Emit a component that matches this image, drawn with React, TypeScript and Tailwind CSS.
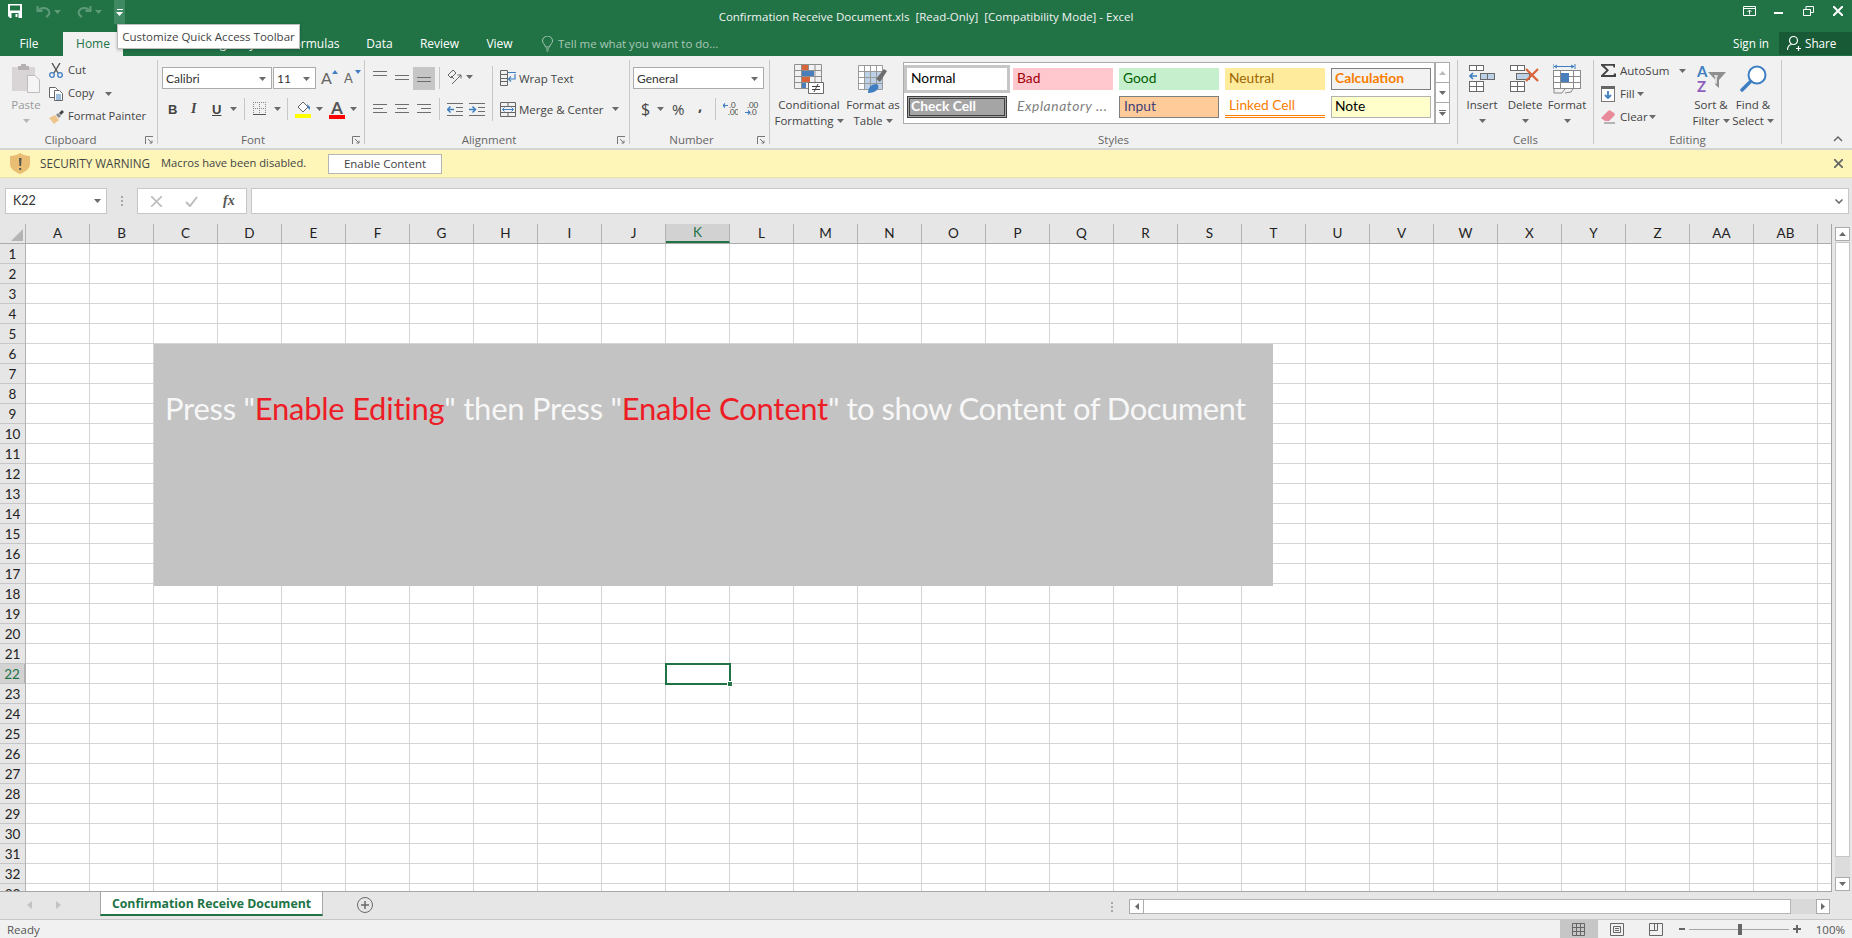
import type { ReactNode } from 'react';

const columns = ['A','B','C','D','E','F','G','H','I','J','K','L','M','N','O','P','Q','R','S','T','U','V','W','X','Y','Z','AA','AB'];
const rows = Array.from({ length: 33 }, (_, i) => i + 1);
const green = '#217346';

const Caret = ({ className = '', color = '#6a6a6a' }: { className?: string; color?: string }) => (
  <svg width="7" height="4" viewBox="0 0 7 4" className={`shrink-0 ${className}`}>
    <path d="M0 0h7L3.5 4z" fill={color} />
  </svg>
);

const Launcher = () => (
  <svg width="9" height="9" viewBox="0 0 9 9" className="absolute right-[3px] top-[76px]" fill="none" stroke="#777">
    <path d="M.5 8V.5H8" />
    <path d="M3 3l4 4M7 4.5V7H4.5" />
  </svg>
);

const Group = ({ label, width, launcher, children }: { label: string; width: string; launcher?: boolean; children: ReactNode }) => (
  <div className={`relative h-[84px] shrink-0 border-r border-[#c8c8c8] ${width}`}>
    <div className="flex h-[74px]">{children}</div>
    <div className={`h-[10px] text-center text-[11.5px] leading-[12px] text-[#666] ${launcher ? 'pr-[16px]' : ''}`}>{label}</div>
    {launcher && <Launcher />}
  </div>
);

const BigButton = ({ icon, lines, width, caretOnly, className = '', muted }: { icon: ReactNode; lines: string[]; width: string; caretOnly?: boolean; className?: string; muted?: boolean }) => (
  <div className={`flex shrink-0 flex-col items-center ${width} ${className}`}>
    <div className="flex h-[37px] items-center justify-center">{icon}</div>
    {lines.map((l, i) => (
      <div key={l} className={`flex h-[16px] items-center gap-[3px] whitespace-nowrap leading-none ${muted ? 'text-[#9a9a9a]' : ''}`}>
        {l}
        {i === lines.length - 1 && !caretOnly && <Caret />}
      </div>
    ))}
    {caretOnly && (
      <div className="flex h-[16px] items-center">
        <Caret color={muted ? '#b5b5b5' : '#6a6a6a'} />
      </div>
    )}
  </div>
);

const Lines = ({ widths, aligned = 'left' }: { widths: number[]; aligned?: 'left' | 'center' | 'right' }) => (
  <svg width="14" height="12" viewBox="0 0 14 12" stroke="#6e6e6e">
    {widths.map((w, i) => {
      const x = aligned === 'left' ? 0 : aligned === 'right' ? 14 - w : (14 - w) / 2;
      return <path key={i} d={`M${x} ${i * 4 + 1.5}h${w}`} />;
    })}
  </svg>
);

const ComboBox = ({ text, width }: { text: string; width: string }) => (
  <div className={`flex h-[22px] items-center justify-between border border-[#ababab] bg-white pl-[3px] pr-[5px] pt-[1px] font-['Lato',sans-serif] text-[12px] text-[#333] ${width}`}>
    <span>{text}</span>
    <Caret />
  </div>
);

const SaveIcon = () => (
  <svg width="14" height="14" viewBox="0 0 14 14" fill="none">
    <path d="M0 0h14v14H2l-2-2z" fill="#fff" />
    <path d="M2 1.500h10v5H2z" fill={green} />
    <path d="M3.500 9h7v5h-7z" fill={green} />
    <path d="M7.500 10h2v3h-2z" fill="#fff" />
  </svg>
);

const UndoIcon = ({ flip }: { flip?: boolean }) => (
  <svg width="15" height="13" viewBox="0 0 15 13" fill="none" stroke="#5c9a78" strokeWidth="2" className={flip ? '-scale-x-100' : ''}>
    <path d="M1.500 1v5h5" />
    <path d="M2 6c3-4 9-4 11 0 1 3-1 5-3 6" />
  </svg>
);

const PasteIcon = () => (
  <svg width="28" height="29" viewBox="0 0 28 29">
    <path d="M0 3h23v24H0z" fill="#d9d5d6" />
    <path d="M6 2h3V0h5v2h3v4H6z" fill="#b5b1b2" />
    <path d="M15.500 11.500H23l4.500 4.500v12.500H15.500z" fill="#f6f5f6" stroke="#c0bcbd" />
  </svg>
);

const CutIcon = () => (
  <svg width="14" height="15" viewBox="0 0 14 15" fill="none">
    <path d="M3 0l6 10M11 0L5 10" stroke="#555" strokeWidth="1.400" />
    <circle cx="3" cy="12" r="2.300" stroke="#3f7fc1" strokeWidth="1.300" />
    <circle cx="11" cy="12" r="2.300" stroke="#3f7fc1" strokeWidth="1.300" />
  </svg>
);

const CopyIcon = () => (
  <svg width="14" height="14" viewBox="0 0 14 14" fill="none">
    <path d="M.5.500h6l2 2v8h-8z" fill="#fff" stroke="#666" />
    <path d="M5.500 3.500h5l3 3v7h-8z" fill="#fff" stroke="#666" />
    <path d="M7 8h5M7 10h5M7 12h5" stroke="#3f7fc1" />
  </svg>
);

const PainterIcon = () => (
  <svg width="16" height="14" viewBox="0 0 16 14">
    <path d="M0 8l6-3 4 5-5 4z" fill="#eec58a" />
    <path d="M7 5l3 3 2-2-3-3z" fill="#8a8a8a" />
    <path d="M10 3l3-3 2 2-3 3z" fill="#444" />
  </svg>
);

const GrowIcon = ({ up }: { up: boolean }) => (
  <div className="relative flex h-[22px] w-[14px] items-center font-['Lato',sans-serif] leading-none text-[#666]">
    <span className={up ? 'text-[16px]' : 'text-[13px]'}>A</span>
    <svg width="6" height="4" viewBox="0 0 6 4" className="absolute right-[-3px] top-[3px]">
      <path d={up ? 'M0 4h6L3 0z' : 'M0 0h6L3 4z'} fill="#3f7fc1" />
    </svg>
  </div>
);

const BorderIcon = () => (
  <svg width="13" height="14" viewBox="0 0 13 14" fill="none" stroke="#888" strokeDasharray="1 1">
    <path d="M.5 0v12M6.500 0v12M12.500 0v12M0 .500h13M0 6.500h13" />
    <path d="M0 12.500h13" strokeDasharray="none" stroke="#555" />
  </svg>
);

const FillIcon = () => (
  <svg width="16" height="17" viewBox="0 0 16 17" fill="none">
    <path d="M3 6l5-5 5 5-5 5z" stroke="#666" fill="#fff" />
    <path d="M12 3l3 3v3l-2-2z" fill="#3f7fc1" />
    <path d="M0 13h16v4H0z" fill="#ffff00" />
  </svg>
);

const FontColorIcon = () => (
  <div className="flex w-[16px] flex-col items-center">
    <span className="h-[14px] font-['Lato',sans-serif] text-[17px] font-bold leading-[15px] text-[#555]">A</span>
    <span className="mt-[1px] h-[4px] w-[16px] bg-[#ff0000]" />
  </div>
);

const OrientIcon = () => (
  <svg width="16" height="16" viewBox="0 0 16 16" fill="none" stroke="#666">
    <path d="M1 6l5-5 3 3-5 5zM4 7l3 3" />
    <path d="M5 15L14 6M10.500 6H14v3.500" />
  </svg>
);

const WrapIcon = () => (
  <svg width="16" height="16" viewBox="0 0 16 16" fill="none">
    <path d="M.5.500h7v4h-7zM.5 4.500h7v4h-7zM.5 8.500h7v7h-7zM7.500 11.500h-7" stroke="#666" />
    <path d="M8 2.500h8" stroke="#3f7fc1" />
    <path d="M15 4v5h-6M11 6.500L8.500 9l2.500 2.500" stroke="#3f7fc1" strokeWidth="1.200" />
  </svg>
);

const MergeIcon = () => (
  <svg width="16" height="15" viewBox="0 0 16 15" fill="none">
    <path d="M.5.500h15v14H.5zM.5 4.500h15M.5 10.500h15M8 .500v4M8 10.500v4" stroke="#666" />
    <path d="M2.500 7.500h11M4.500 5.500l-2 2 2 2M11.500 5.500l2 2-2 2" stroke="#3f7fc1" />
  </svg>
);

const IndentIcon = ({ flip }: { flip?: boolean }) => (
  <svg width="16" height="13" viewBox="0 0 16 13" fill="none">
    <path d="M0 .500h16M9 4.500h7M9 8.500h7M0 12.500h16" stroke="#6e6e6e" />
    {flip ? (
      <path d="M0 6.500h6M3.500 3.500l3 3-3 3" stroke="#3f7fc1" strokeWidth="1.500" />
    ) : (
      <path d="M7 6.500H1M3.500 3.500l-3 3 3 3" stroke="#3f7fc1" strokeWidth="1.500" />
    )}
  </svg>
);

const DecimalIcon = ({ more }: { more?: boolean }) => (
  <svg width="15" height="14" viewBox="0 0 15 14" className="font-['Lato',sans-serif]">
    <text x={more ? 6 : 2} y="6" fontSize="8" fill="#444">{more ? '.0' : '.00'}</text>
    <text x="5" y="13" fontSize="8" fill="#444">{more ? '.00' : '.0'}</text>
    {more ? (
      <path d="M5 3.500H0M2 1.500l-2 2 2 2" fill="none" stroke="#3f7fc1" strokeWidth="1.200" />
    ) : (
      <path d="M0 10.500h5M3 8.500l2 2-2 2" fill="none" stroke="#3f7fc1" strokeWidth="1.200" />
    )}
  </svg>
);

const ConditionalIcon = () => (
  <svg width="30" height="30" viewBox="0 0 30 30" fill="none">
    <path d="M.5.500h27v24H.5zM7.500.500v24M14.500.500v24M21 .500v24M.5 6.500h27M.5 12.500h27M.5 18.500h27" stroke="#8f8f8f" />
    <path d="M8 1h6v5H8zM8 13h8v5H8z" fill="#d9643a" />
    <path d="M8 7h12v5H8zM8 19h4v5H8z" fill="#4a7ebb" />
    <path d="M14.500 18.500h15v11h-15z" fill="#fff" stroke="#6a6a6a" />
    <path d="M18 22.500h8M18 25.500h8M24 20l-4 8" stroke="#444" />
  </svg>
);

const TableIcon = () => (
  <svg width="30" height="30" viewBox="0 0 30 30" fill="none">
    <path d="M0 2h24v24H0z" fill="#fff" />
    <path d="M6 7h18v19H6z" fill="#bcd0e6" />
    <path d="M.5 1.500h24v24H.5zM6.500 1.500v24M12.500 1.500v24M18.500 1.500v24M.5 7.500h24M.5 13.500h24M.5 19.500h24" stroke="#9a9a9a" />
    <path d="M18 15l8-10 3 2-7 11z" fill="#6d6d6d" />
    <path d="M10 29c0-5 3-9 8-9 3 0 3 4 1 6-2 2-5 3-9 3z" fill="#3f7fc1" />
  </svg>
);

const GridRect = ({ x, y, w, h, cols, rowsN, fill }: { x: number; y: number; w: number; h: number; cols: number; rowsN: number; fill?: string }) => (
  <g>
    <rect x={x + 0.5} y={y + 0.5} width={w} height={h} fill={fill ?? '#fff'} stroke="#6a6a6a" />
    {Array.from({ length: cols - 1 }, (_, i) => (
      <path key={i} d={`M${x + 0.5 + (w * (i + 1)) / cols} ${y}v${h}`} stroke="#6a6a6a" />
    ))}
    {Array.from({ length: rowsN - 1 }, (_, i) => (
      <path key={i} d={`M${x} ${y + 0.5 + (h * (i + 1)) / rowsN}h${w}`} stroke="#6a6a6a" />
    ))}
  </g>
);

const InsertIcon = () => (
  <svg width="26" height="27" viewBox="0 0 26 27" fill="none">
    <GridRect x={0} y={0} w={14} h={5} cols={2} rowsN={1} />
    <GridRect x={11} y={8} w={14} h={6} cols={2} rowsN={1} fill="#bcd0e6" />
    <path d="M8 11H1M4 8l-3 3 3 3" stroke="#3f7fc1" strokeWidth="1.600" />
    <GridRect x={0} y={16} w={14} h={10} cols={2} rowsN={2} />
  </svg>
);

const DeleteIcon = () => (
  <svg width="30" height="27" viewBox="0 0 30 27" fill="none">
    <GridRect x={0} y={0} w={14} h={5} cols={2} rowsN={1} />
    <rect x="6.500" y="8.500" width="13" height="6" fill="#bcd0e6" stroke="#6a6a6a" />
    <GridRect x={0} y={16} w={14} h={10} cols={2} rowsN={2} />
    <path d="M16 4l12 12M28 4L16 16" stroke="#d9643a" strokeWidth="2.200" />
  </svg>
);

const FormatIcon = () => (
  <svg width="28" height="30" viewBox="0 0 28 30" fill="none">
    <path d="M0 0v5M22 0v5M1 2.500h20M4 1L1.500 2.500 4 4M18 1l3 1.500L18 4" stroke="#3f7fc1" />
    <rect x=".5" y="6.500" width="27" height="18" fill="#fff" stroke="#8a8a8a" />
    <path d="M7.500 6.500v18M20.500 6.500v18M.5 12.500h27M.5 18.500h27" stroke="#8a8a8a" />
    <rect x="8" y="9" width="8" height="9" fill="#4a7ebb" />
    <path d="M1 25v4h8l3-4M12 29l6-1 2-3" stroke="#8a8a8a" />
  </svg>
);

const SigmaIcon = () => (
  <svg width="15" height="13" viewBox="0 0 15 13">
    <path d="M0 0h14v3.500h-1.500L12 1.800H3.500L8 6.200 3.200 11H12.500l.5-1.600H15V13H0v-1.400L5.300 6.300 0 1.400z" fill="#444" />
  </svg>
);

const FillDownIcon = () => (
  <svg width="14" height="16" viewBox="0 0 14 16" fill="none">
    <rect x=".5" y=".5" width="13" height="15" fill="#fff" stroke="#777" />
    <path d="M0 0h14v3H0z" fill="#666" />
    <path d="M7 5v7M4 9l3 3 3-3" stroke="#3f7fc1" strokeWidth="1.800" />
  </svg>
);

const EraserIcon = () => (
  <svg width="14" height="14" viewBox="0 0 14 14" fill="none">
    <path d="M0 8l7-7c1-1 2-1 3 0l3 2c1 1 1 2 0 3l-5 5H4z" fill="#e98a9b" />
    <path d="M3 13h11" stroke="#777" />
  </svg>
);

const SortIcon = () => (
  <svg width="29" height="27" viewBox="0 0 29 27" className="font-['Lato',sans-serif]">
    <text x="0" y="12" fontSize="15" fontWeight="700" fill="#3f7fc1">A</text>
    <text x="0" y="27" fontSize="15" fontWeight="700" fill="#8f5fbf">Z</text>
    <path d="M11 7h18l-7 8v8l-3.500-3v-5z" fill="#8f8f8f" />
    <path d="M17 10h4l-1 3v6l-2-1.500V13z" fill="#dcdcdc" />
  </svg>
);

const FindIcon = () => (
  <svg width="27" height="27" viewBox="0 0 27 27" fill="none">
    <circle cx="17" cy="10" r="8.500" stroke="#3f7fc1" strokeWidth="2" fill="#fff" />
    <path d="M10.500 16.500L2 25" stroke="#3f7fc1" strokeWidth="3.500" strokeLinecap="round" />
  </svg>
);

const StyleCell = ({ className, children }: { className: string; children: string }) => (
  <div className={`flex h-[22px] w-[100px] items-center overflow-hidden whitespace-nowrap pb-[2px] font-['Lato',sans-serif] text-[13.8px] leading-none ${className}`}>
    {children}
  </div>
);

const ScrollButton = ({ children, className = '' }: { children: ReactNode; className?: string }) => (
  <div className={`flex items-center justify-center border border-[#ababab] bg-white ${className}`}>{children}</div>
);

const Sheet = () => (
  <div className="relative h-[668px] w-[1832px] shrink-0 overflow-hidden border-b border-r border-[#a6a6a6] bg-white font-['Lato',sans-serif] text-[13.5px] text-[#222]">
    <div className="flex h-[20px] border-b border-[#ababab] bg-[#e6e6e6]">
      <div className="flex w-[26px] shrink-0 items-end justify-end border-r border-[#b1b1b1] p-[2px]">
        <svg width="12" height="12" viewBox="0 0 12 12"><path d="M12 0v12H0z" fill="#b4b4b4" /></svg>
      </div>
      {columns.map((c) => (
        <div
          key={c}
          className={`flex w-[64px] shrink-0 items-center justify-center border-r border-[#b1b1b1] ${c === 'K' ? 'border-b-2 border-b-[#217346] bg-[#d2d2d2] text-[#217346]' : ''}`}
        >
          {c}
        </div>
      ))}
    </div>
    {rows.map((r) => (
      <div key={r} className="flex h-[20px]">
        <div
          className={`flex w-[26px] shrink-0 items-center justify-center border-b border-r border-b-[#c6c6c6] border-r-[#b1b1b1] pt-[1px] ${r === 22 ? 'border-r-2 border-r-[#217346] bg-[#d2d2d2] text-[#217346]' : 'bg-[#e6e6e6]'}`}
        >
          {r}
        </div>
        {columns.map((c) => (
          <div key={c} className="w-[64px] shrink-0 border-b border-r border-[#d4d4d4]" />
        ))}
        <div className="flex-1 border-b border-[#d4d4d4]" />
      </div>
    ))}

    {/* picture lying over the cells */}
    <div className="absolute left-[154px] top-[120px] h-[242px] w-[1119px] whitespace-nowrap bg-[#c3c3c3] pl-[11px] pt-[46px] font-['Lato',sans-serif] text-[31px] leading-[36px] tracking-[-0.26px] text-[#f7f7f7]">
      Press "<span className="text-[#ee1c25]">Enable Editing</span>" then Press "<span className="text-[#ee1c25]">Enable Content</span>"<span className="tracking-[-0.53px]"> to show Content of Document</span>
    </div>

    {/* selected cell K22 */}
    <div className="absolute left-[665px] top-[439px] h-[22px] w-[66px] border-2 border-[#217346]">
      <div className="absolute bottom-[-4px] right-[-4px] h-[6px] w-[6px] border border-white bg-[#217346]" />
    </div>
  </div>
);

export default function App() {
  return (
    <div className="relative flex h-[938px] w-[1852px] flex-col overflow-hidden bg-[#e6e6e6] font-['Open_Sans',sans-serif] text-[11.5px] text-[#444]">
      {/* title bar */}
      <div className="h-[56px] shrink-0 bg-[#217346] text-white">
        <div className="grid h-[32px] grid-cols-[1fr_auto_1fr]">
          <div className="flex items-start">
            <div className="ml-[8px] mt-[4px]"><SaveIcon /></div>
            <div className="ml-[14px] mt-[5px]"><UndoIcon /></div>
            <Caret className="ml-[3px] mt-[10px]" color="#5c9a78" />
            <div className="ml-[16px] mt-[5px]"><UndoIcon flip /></div>
            <Caret className="ml-[3px] mt-[10px]" color="#5c9a78" />
            <div className="ml-[12px] flex h-[24px] w-[11px] flex-col items-center justify-center gap-[2px] bg-[#3f8a63]">
              <span className="h-[1px] w-[6px] bg-white" />
              <Caret color="#fff" />
            </div>
          </div>
          <div className="whitespace-pre pt-[11px] text-[11.5px] leading-none text-[#f2f2f2]">Confirmation Receive Document.xls  [Read-Only]  [Compatibility Mode] - Excel</div>
          <div className="flex items-start justify-end">
            <svg width="13" height="10" viewBox="0 0 13 10" fill="none" stroke="#fff" className="mt-[6px]">
              <path d="M.5.500h12v9H.5zM.5 2.500h12M6.500 8.500V4M4.500 6l2-2 2 2" />
            </svg>
            <span className="ml-[18px] mt-[12px] h-[2px] w-[9px] bg-white" />
            <svg width="11" height="10" viewBox="0 0 11 10" fill="none" stroke="#fff" className="ml-[20px] mt-[6px]">
              <path d="M.5 3.500h7v6h-7zM3 3V.5h7.500v6H8" />
            </svg>
            <svg width="10" height="10" viewBox="0 0 10 10" fill="none" stroke="#fff" strokeWidth="2" className="ml-[19px] mr-[9px] mt-[6px]">
              <path d="M0 0l10 10M10 0L0 10" />
            </svg>
          </div>
        </div>
        <div className="flex h-[24px] items-center text-[12px] leading-none">
          <div className="flex h-full w-[63px] shrink-0 items-center justify-center pr-[5px]">File</div>
          <div className="flex h-full w-[60px] shrink-0 items-center justify-center bg-[#f1f1f1] text-[#217346]">Home</div>
          <div className="flex h-full w-[77px] shrink-0 items-center justify-center">Insert</div>
          <div className="flex h-full w-[80px] shrink-0 items-center justify-center whitespace-nowrap">Page Layout</div>
          <div className="flex h-full w-[67px] shrink-0 items-center justify-center">Formulas</div>
          <div className="flex h-full w-[65px] shrink-0 items-center justify-center">Data</div>
          <div className="flex h-full w-[55px] shrink-0 items-center justify-center">Review</div>
          <div className="flex h-full w-[65px] shrink-0 items-center justify-center">View</div>
          <svg width="11" height="16" viewBox="0 0 11 16" fill="none" stroke="#a9c7b5" className="ml-[10px] shrink-0">
            <path d="M3.500 11C3 8 .5 7.500.5 5a5 5 0 0 1 10 0c0 2.500-2.500 3-3 6zM4 13h3M4.500 15h2" />
          </svg>
          <span className="ml-[5px] whitespace-nowrap text-[11.5px] text-[#a9c7b5]">Tell me what you want to do...</span>
          <div className="ml-auto flex h-full items-center text-[11.7px]">
            <span className="mr-[10px]">Sign in</span>
            <div className="flex h-[23px] w-[73px] items-center self-start bg-[#185a36] pl-[8px]">
              <svg width="14" height="15" viewBox="0 0 14 15" fill="none" stroke="#fff" strokeWidth="1.200">
                <circle cx="6.500" cy="4.500" r="4" />
                <path d="M.5 14c0-3 1.500-5 4-5.500M9 12.500h5M11.500 10v5" />
              </svg>
              <span className="ml-[4px]">Share</span>
            </div>
          </div>
        </div>
      </div>

      {/* ribbon */}
      <div className="relative flex h-[94px] shrink-0 border-b-2 border-[#d4d4d4] bg-[#f1f1f1] pt-[4px]">
        <Group label="Clipboard" width="w-[158px]" launcher>
          <BigButton width="w-[30px]" className="ml-[11px]" icon={<PasteIcon />} lines={['Paste']} caretOnly muted />
          <div className="-mt-[1px] ml-[8px] flex flex-col text-[11.2px]">
            <div className="flex h-[23px] items-center"><span className="w-[19px]"><CutIcon /></span>Cut</div>
            <div className="flex h-[23px] items-center"><span className="w-[19px]"><CopyIcon /></span>Copy<Caret className="ml-[11px]" /></div>
            <div className="flex h-[23px] items-center whitespace-nowrap"><span className="w-[19px]"><PainterIcon /></span>Format Painter</div>
          </div>
        </Group>

        <Group label="Font" width="w-[207px]" launcher>
          <div className="flex flex-col">
            <div className="mt-[7px] flex h-[22px] items-center">
              <ComboBox text="Calibri" width="ml-[4px] w-[110px]" />
              <ComboBox text="11" width="ml-[1px] w-[43px]" />
              <div className="ml-[5px]"><GrowIcon up /></div>
              <div className="ml-[9px]"><GrowIcon up={false} /></div>
            </div>
            <div className="mt-[9px] flex h-[22px] items-center">
              <span className="ml-[10px] w-[9px] font-['Liberation_Sans',sans-serif] text-[13px] font-bold leading-none">B</span>
              <span className="ml-[14px] w-[7px] font-['Liberation_Serif',serif] text-[14px] font-bold italic leading-none">I</span>
              <span className="ml-[14px] w-[9px] font-['Liberation_Sans',sans-serif] text-[13px] font-bold leading-none underline">U</span>
              <Caret className="ml-[9px]" />
              <span className="ml-[7px] h-[22px] w-px bg-[#c8c8c8]" />
              <div className="ml-[8px] w-[13px]"><BorderIcon /></div>
              <Caret className="ml-[8px]" />
              <span className="ml-[6px] h-[22px] w-px bg-[#c8c8c8]" />
              <div className="ml-[7px] w-[16px]"><FillIcon /></div>
              <Caret className="ml-[5px]" />
              <div className="ml-[6px]"><FontColorIcon /></div>
              <Caret className="ml-[5px]" />
            </div>
          </div>
        </Group>

        <Group label="Alignment" width="w-[265px]" launcher>
          <div className="flex w-[127px] shrink-0 flex-col">
            <div className="mt-[7px] flex h-[22px] items-start">
              <div className="ml-[8px] mt-[3px]"><Lines widths={[14, 14]} /></div>
              <div className="ml-[8px] mt-[7px]"><Lines widths={[14, 14]} /></div>
              <div className="ml-[4px] flex h-[23px] w-[22px] items-end justify-center bg-[#c6c6c6] pb-[2px]"><Lines widths={[14, 14]} /></div>
              <span className="ml-[4px] h-[22px] w-px bg-[#c8c8c8]" />
              <div className="ml-[7px] mt-[2px]"><OrientIcon /></div>
              <Caret className="ml-[3px] mt-[8px]" />
            </div>
            <div className="mt-[9px] flex h-[22px] items-center">
              <div className="ml-[8px]"><Lines widths={[14, 10, 14]} /></div>
              <div className="ml-[8px]"><Lines widths={[14, 10, 14]} aligned="center" /></div>
              <div className="ml-[8px]"><Lines widths={[14, 10, 14]} aligned="right" /></div>
              <span className="ml-[8px] h-[22px] w-px bg-[#c8c8c8]" />
              <div className="ml-[7px]"><IndentIcon /></div>
              <div className="ml-[6px]"><IndentIcon flip /></div>
            </div>
          </div>
          <span className="mt-[6px] h-[55px] w-px shrink-0 bg-[#c8c8c8]" />
          <div className="flex flex-col">
            <div className="ml-[7px] mt-[7px] flex h-[22px] items-center"><WrapIcon /><span className="ml-[3px] mt-[2px] whitespace-nowrap">Wrap Text</span></div>
            <div className="ml-[7px] mt-[9px] flex h-[22px] items-center"><MergeIcon /><span className="ml-[3px] mt-[2px] w-[93px] whitespace-nowrap">Merge &amp; Center</span><Caret /></div>
          </div>
        </Group>

        <Group label="Number" width="w-[140px]" launcher>
          <div className="flex flex-col">
            <div className="mt-[7px] flex h-[22px] items-center"><ComboBox text="General" width="ml-[3px] w-[131px]" /></div>
            <div className="mt-[9px] flex h-[22px] items-center">
              <span className="ml-[11px] w-[7px] text-[16px] leading-none">$</span>
              <Caret className="ml-[9px]" />
              <span className="ml-[8px] w-[13px] text-[15px] leading-none">%</span>
              <span className="ml-[13px] w-[4px] -translate-y-[4px] text-[15px] font-bold leading-none">,</span>
              <span className="ml-[13px] h-[22px] w-px bg-[#c8c8c8]" />
              <div className="ml-[7px] w-[15px]"><DecimalIcon more /></div>
              <div className="ml-[7px] w-[15px]"><DecimalIcon /></div>
            </div>
          </div>
        </Group>

        <Group label="Styles" width="w-[688px]">
          <BigButton width="w-[68px]" className="ml-[5px]" icon={<ConditionalIcon />} lines={['Conditional', 'Formatting']} />
          <BigButton width="w-[54px]" className="ml-[3px]" icon={<TableIcon />} lines={['Format as', 'Table']} />
          <div className="ml-[3px] mt-[2px] flex h-[62px]">
            <div className="grid w-[532px] grid-cols-[100px_100px_100px_100px_100px] content-start gap-x-[6px] gap-y-[6px] border border-[#ababab] bg-white pl-[3px] pt-[5px]">
              <StyleCell className="bg-white pl-[4px] text-black ring-[3px] ring-[#c6c6c6]">Normal</StyleCell>
              <StyleCell className="bg-[#ffc7ce] pl-[4px] text-[#9c0006]">Bad</StyleCell>
              <StyleCell className="bg-[#c6efce] pl-[4px] text-[#006100]">Good</StyleCell>
              <StyleCell className="bg-[#ffeb9c] pl-[4px] text-[#9c6500]">Neutral</StyleCell>
              <StyleCell className="border border-[#7f7f7f] bg-[#f2f2f2] pl-[3px] font-bold text-[#fa7d00]">Calculation</StyleCell>
              <StyleCell className="border-[3px] border-double border-[#3f3f3f] bg-[#a5a5a5] pl-[1px] font-bold text-white">Check Cell</StyleCell>
              <StyleCell className="pl-[4px] italic tracking-[0.6px] text-[#7f7f7f]">Explanatory ...</StyleCell>
              <StyleCell className="border border-[#7f7f7f] bg-[#ffcc99] pl-[4px] text-[#3f3f76]">Input</StyleCell>
              <StyleCell className="border-b-[3px] border-double border-[#ff8001] pl-[4px] text-[#fa7d00]">Linked Cell</StyleCell>
              <StyleCell className="border border-[#b2b2b2] bg-[#ffffcc] pl-[3px] text-black">Note</StyleCell>
            </div>
            <div className="flex w-[15px] flex-col">
              <ScrollButton className="h-[21px] bg-[#e6e6e6]"><svg width="7" height="4" viewBox="0 0 7 4"><path d="M0 4h7L3.500 0z" fill="#bdbdbd" /></svg></ScrollButton>
              <ScrollButton className="h-[20px] border-t-0"><Caret /></ScrollButton>
              <ScrollButton className="h-[21px] flex-col gap-[1px] border-t-0"><span className="h-px w-[7px] bg-[#6a6a6a]" /><Caret /></ScrollButton>
            </div>
          </div>
        </Group>

        <Group label="Cells" width="w-[136px]">
          <BigButton width="w-[48px]" icon={<InsertIcon />} lines={['Insert']} caretOnly />
          <BigButton width="w-[38px]" icon={<DeleteIcon />} lines={['Delete']} caretOnly />
          <BigButton width="w-[46px]" icon={<FormatIcon />} lines={['Format']} caretOnly />
        </Group>

        <Group label="Editing" width="w-[188px]">
          <div className="-mt-[1px] flex w-[96px] shrink-0 flex-col">
            <div className="flex h-[23px] items-center pl-[7px]"><span className="w-[19px]"><SigmaIcon /></span><span className="w-[54px]">AutoSum</span><Caret className="ml-[5px]" /></div>
            <div className="flex h-[23px] items-center pl-[7px]"><span className="w-[19px]"><FillDownIcon /></span><span className="w-[17px]">Fill</span><Caret /></div>
            <div className="flex h-[23px] items-center pl-[7px]"><span className="w-[19px]"><EraserIcon /></span><span className="w-[29px]">Clear</span><Caret /></div>
          </div>
          <BigButton width="w-[42px]" icon={<SortIcon />} lines={['Sort &', 'Filter']} />
          <BigButton width="w-[42px]" icon={<FindIcon />} lines={['Find &', 'Select']} />
        </Group>

        <svg width="10" height="6" viewBox="0 0 10 6" fill="none" stroke="#6a6a6a" strokeWidth="1.500" className="absolute bottom-[6px] right-[9px]">
          <path d="M1 5l4-4 4 4" />
        </svg>
      </div>

      {/* security warning */}
      <div className="flex h-[28px] shrink-0 items-center border-b border-[#e6e2a8] bg-[#fdf6b8] text-[#444]">
        <svg width="20" height="21" viewBox="0 0 20 21" className="ml-[10px] shrink-0">
          <path d="M10 0c3 2 6 3 10 3v8c0 5-5 8-10 10C5 19 0 16 0 11V3c4 0 7-1 10-3z" fill="#e9bd72" />
          <path d="M9 5h2.500l-.4 8H9.400zM9.200 15h2v2h-2z" fill="#555" />
        </svg>
        <span className="ml-[10px] w-[121px] whitespace-nowrap text-[11.7px]">SECURITY WARNING</span>
        <span className="w-[146px] whitespace-nowrap text-[11.2px]">Macros have been disabled.</span>
        <div className="ml-[21px] flex h-[20px] w-[114px] items-center justify-center border border-[#b5b5b5] bg-white">Enable Content</div>
        <svg width="9" height="9" viewBox="0 0 9 9" fill="none" stroke="#666" strokeWidth="1.800" className="ml-auto mr-[9px]">
          <path d="M0 0l9 9M9 0L0 9" />
        </svg>
      </div>

      {/* formula bar */}
      <div className="mt-[10px] flex h-[26px] shrink-0 items-stretch">
        <div className="ml-[5px] flex w-[102px] items-center justify-between border border-[#c6c6c6] bg-white pl-[7px] pr-[5px] font-['Lato',sans-serif] text-[12.5px] text-[#333]">
          K22<Caret />
        </div>
        <div className="flex w-[30px] flex-col items-center justify-center gap-[2px]">
          <span className="h-[2px] w-[2px] bg-[#a8a8a8]" />
          <span className="h-[2px] w-[2px] bg-[#a8a8a8]" />
          <span className="h-[2px] w-[2px] bg-[#a8a8a8]" />
        </div>
        <div className="flex w-[110px] items-center border border-[#c6c6c6] bg-white">
          <svg width="11" height="11" viewBox="0 0 11 11" fill="none" stroke="#bdbdbd" strokeWidth="1.600" className="ml-[13px]"><path d="M0 0l11 11M11 0L0 11" /></svg>
          <svg width="13" height="11" viewBox="0 0 13 11" fill="none" stroke="#bdbdbd" strokeWidth="2" className="ml-[23px]"><path d="M1 6l4 4 7-9" /></svg>
          <span className="ml-[25px] font-['Liberation_Serif',serif] text-[14px] font-bold italic leading-none text-[#555]">fx</span>
        </div>
        <div className="ml-[4px] flex w-[1598px] items-center justify-end border border-[#c6c6c6] bg-white pr-[5px]">
          <svg width="8" height="5" viewBox="0 0 8 5" fill="none" stroke="#666" strokeWidth="1.500"><path d="M.5.500L4 4 7.500.500" /></svg>
        </div>
      </div>

      {/* sheet and vertical scroll bar */}
      <div className="mt-[10px] flex h-[668px] shrink-0">
        <Sheet />
        <div className="ml-[3px] flex h-[667px] w-[15px] flex-col pt-[3px]">
          <ScrollButton className="h-[14px]"><svg width="7" height="4" viewBox="0 0 7 4"><path d="M0 4h7L3.500 0z" fill="#6a6a6a" /></svg></ScrollButton>
          <div className="mt-[1px] h-[615px] border border-[#c6c6c6] bg-white" />
          <div className="flex-1 bg-[#dcdcdc]" />
          <ScrollButton className="h-[14px]"><Caret /></ScrollButton>
        </div>
      </div>

      {/* tab strip */}
      <div className="flex h-[27px] shrink-0 items-start">
        <svg width="5" height="8" viewBox="0 0 5 8" className="ml-[27px] mt-[9px]"><path d="M5 0v8L0 4z" fill="#c2c2c2" /></svg>
        <svg width="5" height="8" viewBox="0 0 5 8" className="ml-[24px] mt-[9px]"><path d="M0 0v8l5-4z" fill="#c2c2c2" /></svg>
        <div className="ml-[39px] flex h-[24px] w-[223px] items-center justify-center whitespace-nowrap border-x border-b-2 border-x-[#a6a6a6] border-b-[#217346] bg-white pt-[2px] text-[12.3px] font-bold text-[#217346]">
          Confirmation Receive Document
        </div>
        <svg width="16" height="16" viewBox="0 0 16 16" fill="none" stroke="#6a6a6a" className="ml-[34px] mt-[5px]">
          <circle cx="8" cy="8" r="7.500" />
          <path d="M8 4v8M4 8h8" strokeWidth="1.500" />
        </svg>
        <div className="ml-[738px] mt-[7px] flex h-[15px] flex-col justify-center gap-[2px]">
          <span className="h-[2px] w-[2px] bg-[#a8a8a8]" />
          <span className="h-[2px] w-[2px] bg-[#a8a8a8]" />
          <span className="h-[2px] w-[2px] bg-[#a8a8a8]" />
        </div>
        <div className="ml-[16px] mt-[7px] flex h-[15px] w-[701px]">
          <ScrollButton className="w-[15px]"><svg width="4" height="7" viewBox="0 0 4 7"><path d="M4 0v7L0 3.500z" fill="#6a6a6a" /></svg></ScrollButton>
          <div className="w-[647px] border-y border-r border-[#b5b5b5] bg-white" />
          <div className="flex-1 bg-[#d9d9d9]" />
          <ScrollButton className="w-[14px]"><svg width="4" height="7" viewBox="0 0 4 7"><path d="M0 0v7l4-3.500z" fill="#6a6a6a" /></svg></ScrollButton>
        </div>
      </div>

      {/* status bar */}
      <div className="flex h-[19px] flex-1 items-center border-t border-[#c6c6c6] bg-[#f1f1f1] text-[#555]">
        <span className="ml-[7px] mt-[1px]">Ready</span>
        <div className="ml-auto flex h-full w-[38px] items-center justify-center bg-[#c6c6c6]">
          <svg width="13" height="13" viewBox="0 0 13 13" fill="none" stroke="#666">
            <path d="M.5.500h12v12H.5zM4.500.500v12M8.500.500v12M.5 4.500h12M.5 8.500h12" />
          </svg>
        </div>
        <svg width="14" height="13" viewBox="0 0 14 13" fill="none" stroke="#666" className="ml-[12px]">
          <path d="M.5.500h13v12H.5zM3.500 3.500h7v6h-7zM5 5.500h4M5 7.500h4" />
        </svg>
        <svg width="14" height="13" viewBox="0 0 14 13" fill="none" stroke="#666" className="ml-[25px]">
          <path d="M.5.500h13v12H.5zM.5 7.500h8M5.500.500v7M8.500.500v7" />
        </svg>
        <span className="ml-[16px] h-[2px] w-[6px] bg-[#666]" />
        <div className="relative ml-[4px] h-px w-[100px] bg-[#a6a6a6]">
          <span className="absolute left-[49px] top-[-5px] h-[11px] w-[4px] bg-[#666]" />
        </div>
        <svg width="8" height="8" viewBox="0 0 8 8" fill="none" stroke="#666" strokeWidth="2" className="ml-[4px]"><path d="M4 0v8M0 4h8" /></svg>
        <span className="ml-[15px] mr-[7px] mt-[1px] text-[11.5px]">100%</span>
      </div>

      {/* tooltip */}
      <div className="absolute left-[117px] top-[24px] flex h-[25px] w-[183px] items-center justify-center whitespace-nowrap border border-[#bebebe] bg-white text-[11.5px] text-[#444] shadow-[0_1px_3px_rgba(0,0,0,0.25)]">
        Customize Quick Access Toolbar
      </div>
    </div>
  );
}
